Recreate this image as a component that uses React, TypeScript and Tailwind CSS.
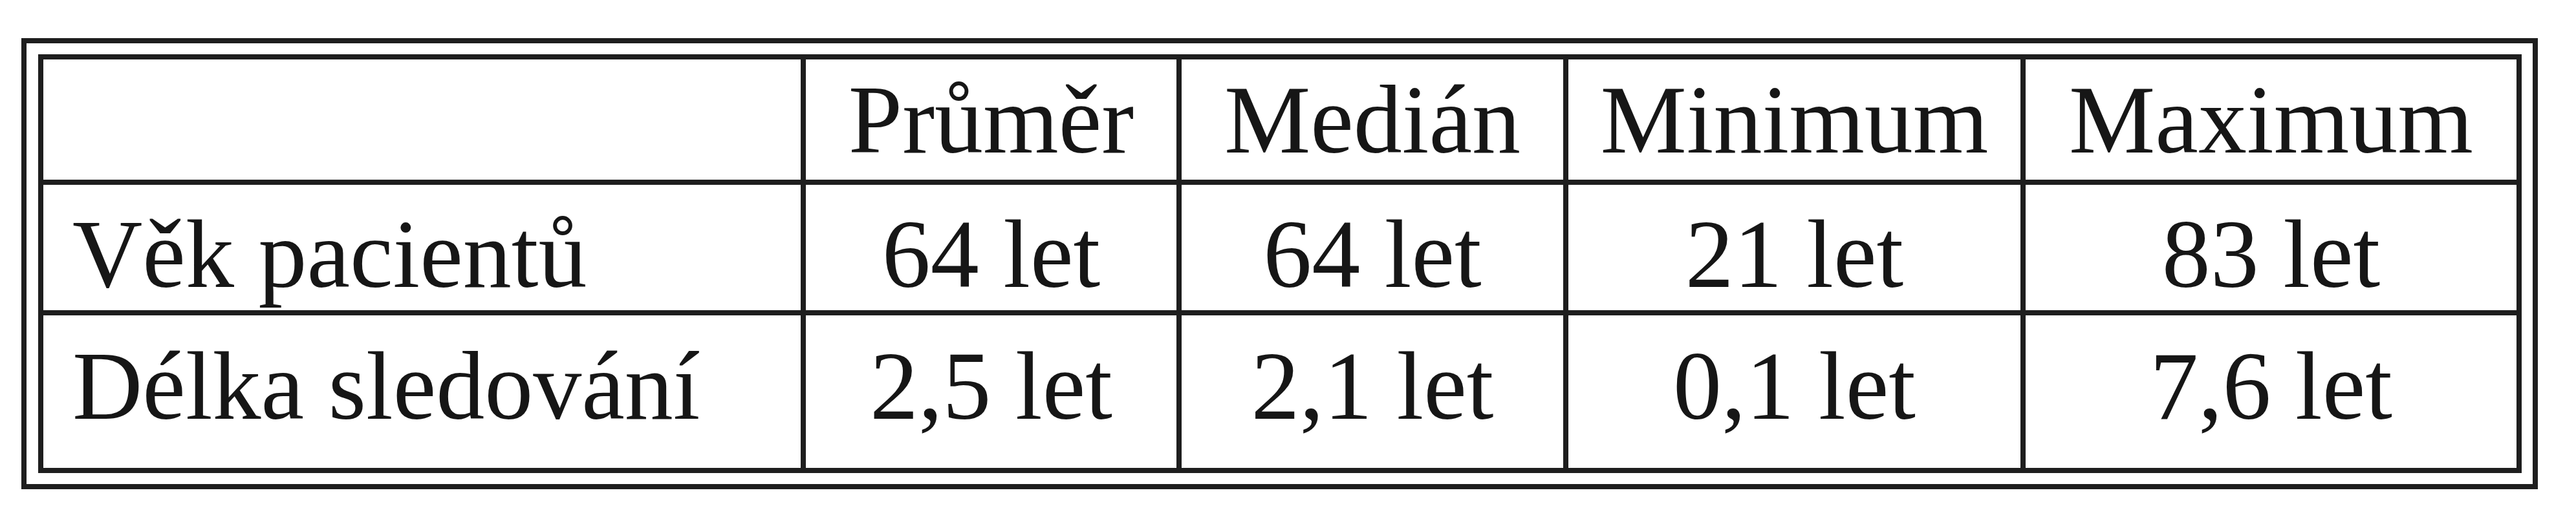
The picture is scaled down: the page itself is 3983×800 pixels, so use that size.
const header = ['Průměr', 'Medián', 'Minimum', 'Maximum'];

const rows = [
  { label: 'Věk pacientů', values: ['64 let', '64 let', '21 let', '83 let'], pad: 'pt-[32px]' },
  { label: 'Délka sledování', values: ['2,5 let', '2,1 let', '0,1 let', '7,6 let'], pad: 'pt-[34px]' },
];

export default function App() {
  return (
    <div className="h-[800px] w-[3983px] bg-white pl-[33px] pt-[59px] font-['Liberation_Serif','Times_New_Roman',serif] text-[150px] leading-[150px] text-[#161616]">
      {/* dvojitý rámeček kolem tabulky */}
      <div className="w-[3891px] border-[8px] border-[#1e1e1e] py-[17px] pl-[18px] pr-[17px]">
        <div className="grid grid-cols-[1171px_573px_590px_699px_759px] grid-rows-[186px_194px_236px] gap-[8px] bg-[#1e1e1e] p-[8px]">
          <div className="bg-white" />
          {header.map((h) => (
            <div key={h} className="bg-white pt-[18px] text-center whitespace-nowrap">
              {h}
            </div>
          ))}

          {rows.map((r) => (
            <Row key={r.label} label={r.label} values={r.values} pad={r.pad} />
          ))}
        </div>
      </div>
    </div>
  );
}

function Row({ label, values, pad }: { label: string; values: string[]; pad: string }) {
  return (
    <>
      <div className={`bg-white pl-[45px] whitespace-nowrap ${pad}`}>{label}</div>
      {values.map((v, i) => (
        <div key={i} className={`bg-white text-center whitespace-nowrap ${pad}`}>
          {v}
        </div>
      ))}
    </>
  );
}
